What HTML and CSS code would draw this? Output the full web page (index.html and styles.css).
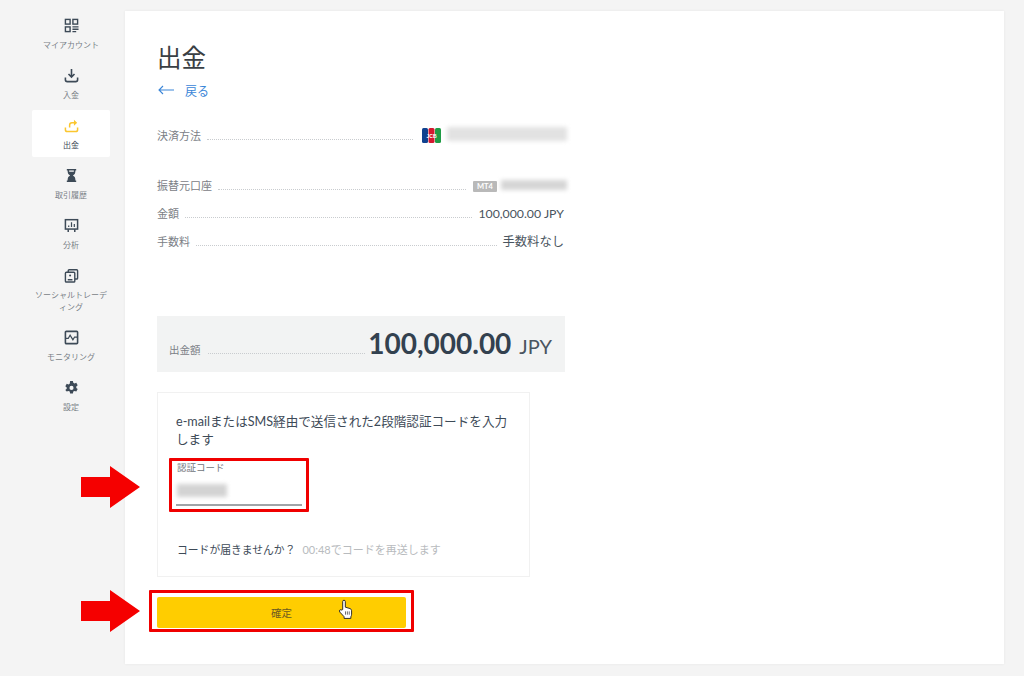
FILE: index.html
```html
<!DOCTYPE html>
<html lang="ja">
<head>
<meta charset="utf-8">
<title>出金</title>
<link rel="stylesheet" href="styles.css">
</head>
<body>
<div class="app">
  <nav class="sidebar">
    <a class="nav-item">
      <svg class="nav-icon" viewBox="0 0 16 16" fill="none" stroke="#3d4a57" stroke-width="1.5"><rect x="1.5" y="1.5" width="5" height="5"/><rect x="1.5" y="9.5" width="5" height="5"/><rect x="9.5" y="1.5" width="5" height="5"/><path d="M9 9.5h6.5M9 12h6.5M9 14.5h4"/></svg>
      <span class="nav-label">マイアカウント</span>
    </a>
    <a class="nav-item">
      <svg class="nav-icon" viewBox="0 0 16 16" fill="none" stroke="#3d4a57" stroke-width="1.7"><path d="M8 1v8M4.8 6.4 8 9.6l3.2-3.2"/><path d="M1.5 10v2.5q0 2 2 2h9q2 0 2-2V10"/></svg>
      <span class="nav-label">入金</span>
    </a>
    <a class="nav-item is-active">
      <svg class="nav-icon" viewBox="0 0 16 16" fill="none" stroke="#fbc62f" stroke-width="1.6"><path d="M6 10V7.5q0-2.5 2.5-2.5H13"/><path d="M10.6 1.8 14 5l-3.4 3.2z" fill="#fbc62f" stroke="none"/><path d="M1.5 10v2.5q0 2 2 2h9q2 0 2-2V10"/></svg>
      <span class="nav-label">出金</span>
    </a>
    <a class="nav-item">
      <svg class="nav-icon" viewBox="0 0 16 16" fill="#3d4a57"><path d="M3 1h10v1.600h-.9v1.600q0 2.400-2.600 3.800 2.600 1.400 2.600 3.800v1.600h.9V15H3v-1.600h.9v-1.600Q3.900 9.400 6.500 8 3.900 6.600 3.900 4.200V2.600H3z"/><path d="M5.500 2.600h5v1.400h-5z" fill="#f4f4f4"/></svg>
      <span class="nav-label">取引履歴</span>
    </a>
    <a class="nav-item">
      <svg class="nav-icon" viewBox="0 0 16 16" fill="none" stroke="#3d4a57" stroke-width="1.6"><rect x="1.500" y="1.800" width="13" height="10"/><path d="M4.500 12v3M11.500 12v3"/><path d="M5 9.500V8M8 9.500V4.500M11 9.500V6.500" stroke-width="1.300"/></svg>
      <span class="nav-label">分析</span>
    </a>
    <a class="nav-item">
      <svg class="nav-icon" viewBox="0 0 16 16" fill="none" stroke="#3d4a57" stroke-width="1.500"><rect x="1.500" y="4.500" width="10" height="10.500" rx="1"/><path d="M4.500 4.500V2.800q0-1 1-1h8q1 0 1 1v8q0 1-1 1h-1.800"/><circle cx="6.500" cy="8" r="1.100" fill="#3d4a57" stroke="none"/><path d="M4 12.500h5" stroke-width="1.600"/></svg>
      <span class="nav-label">ソーシャルトレーディング</span>
    </a>
    <a class="nav-item">
      <svg class="nav-icon" viewBox="0 0 16 16" fill="none" stroke="#3d4a57" stroke-width="1.700"><rect x="1.500" y="1.500" width="13" height="13" rx="1"/><path d="M2 9h2.500l2-3.500 3 5 1.800-3H14" stroke-width="1.300"/></svg>
      <span class="nav-label">モニタリング</span>
    </a>
    <a class="nav-item">
      <svg class="nav-icon" viewBox="0 0 16 16" fill="#3d4a57"><path fill-rule="evenodd" d="M6.500 1h3l.4 2 1.300.7 1.900-.7 1.500 2.600-1.500 1.300v1.500l1.500 1.300-1.500 2.600-1.900-.7-1.300.7-.4 2h-3l-.4-2-1.300-.7-1.900.7L1.400 10.700l1.500-1.300V7.900L1.400 6.600l1.500-2.600 1.900.7 1.300-.7zM8 6.200a2.200 2.200 0 1 0 0 4.400 2.200 2.200 0 0 0 0-4.400z"/></svg>
      <span class="nav-label">設定</span>
    </a>
  </nav>

  <main class="card">
    <h1 class="title">出金</h1>
    <a class="back">
      <svg class="back-arrow" viewBox="0 0 16 10" fill="none" stroke="#3b86d8" stroke-width="1.100"><path d="M16 5H1M5 1 1 5l4 4"/></svg>
      <span>戻る</span>
    </a>

    <section class="details">
      <div class="row row-method">
        <span class="row-label">決済方法</span><span class="dots"></span>
        <svg class="jcb" viewBox="0 0 19 15"><rect width="6" height="15" rx="1.500" fill="#10428f"/><rect x="6.500" width="6" height="15" rx="1.500" fill="#d3182f"/><rect x="13" width="6" height="15" rx="1.500" fill="#1f9b45"/><text x="9.500" y="9.500" class="jcb-text" text-anchor="middle">JCB</text></svg>
        <span class="redact redact-method"></span>
      </div>
      <div class="row row-account">
        <span class="row-label">振替元口座</span><span class="dots"></span>
        <span class="badge">MT4</span>
        <span class="redact redact-account"></span>
      </div>
      <div class="row">
        <span class="row-label">金額</span><span class="dots"></span>
        <span class="row-value">100,000.00 JPY</span>
      </div>
      <div class="row">
        <span class="row-label">手数料</span><span class="dots"></span>
        <span class="row-value">手数料なし</span>
      </div>
    </section>

    <section class="total">
      <span class="total-label">出金額</span><span class="dots"></span>
      <strong class="total-amount">100,000.00</strong>
      <span class="total-currency">JPY</span>
    </section>

    <section class="verify">
      <p class="verify-text">e-mailまたはSMS経由で送信された2段階認証コードを入力します</p>
      <div class="field">
        <span class="field-label">認証コード</span>
        <span class="redact redact-code"></span>
        <span class="field-line"></span>
      </div>
      <p class="resend"><span class="resend-q">コードが届きませんか？</span><span class="resend-timer">00:48でコードを再送します</span></p>
    </section>

    <div class="confirm-wrap">
      <button class="confirm" type="button">確定</button>
      <svg class="cursor" viewBox="0 0 16 22"><path d="M5 11V2.500a1.400 1.400 0 0 1 2.800 0V8.500l5 1.500q1.700.6 1.700 2.300v3.700q0 1.500-.8 2.800V20.500H6.500v-1.800L2 13.800q-1-1.400 0-2.300 1-.8 2.200.2z" fill="#fff" stroke="#222" stroke-width="1"/><path d="M8 13v3.500M10 13v3.500M12 13v3.500" stroke="#222" stroke-width=".7"/></svg>
    </div>
  </main>
</div>

<svg class="arrow arrow-code" viewBox="0 0 59 42"><path d="M0 11h29V0l30 21-30 21V31H0z" fill="#f50000"/></svg>
<svg class="arrow arrow-confirm" viewBox="0 0 59 42"><path d="M0 11h29V0l30 21-30 21V31H0z" fill="#f50000"/></svg>
</body>
</html>
```

FILE: styles.css
```css
* { box-sizing: border-box; }
html, body { margin: 0; height: 100%; }
body {
  position: relative;
  width: 1024px;
  height: 676px;
  overflow: hidden;
  background: #f4f4f4;
  color: #3d4a57;
  font-family: Lato, "Noto Sans CJK JP", sans-serif;
}
.app { display: flex; align-items: flex-start; }

.sidebar {
  width: 125px;
  padding: 10px 15px 0 32px;
  display: flex;
  flex-direction: column;
  gap: 3px;
}
.nav-item {
  display: flex;
  flex-direction: column;
  align-items: center;
  padding: 7px 2px 6px;
  border-radius: 2px;
}
.nav-item.is-active { background: #fff; }
.nav-item.is-active .nav-label { color: #3d4a57; }
.nav-icon { width: 15px; height: 15px; margin: 1px 0 6px; display: block; }
.nav-label {
  font-size: 8px;
  line-height: 12px;
  color: #797f86;
  text-align: center;
  line-break: loose;
}

.card {
  width: 879px;
  height: 653px;
  margin-top: 11px;
  padding: 29px 32px 0;
  background: #fff;
  box-shadow: 0 0 3px rgba(0, 0, 0, .06);
}
.title {
  margin: 0;
  font-size: 24.500px;
  line-height: 36px;
  font-weight: 400;
  color: #3a3f44;
}
.back {
  display: flex;
  align-items: center;
  gap: 11px;
  margin: 5px 0 0 1px;
  height: 18px;
  font-size: 12px;
  color: #3b86d8;
}
.back-arrow { width: 16px; height: 10px; }

.details { width: 408px; margin-top: 25px; }
.row {
  display: flex;
  align-items: flex-end;
  height: 28px;
  font-size: 11px;
}
.row-method { height: 20px; margin-bottom: 30px; }
.row-account { height: 20px; margin-bottom: 0; }
.row-label { line-height: 16px; color: #7b8086; }
.dots {
  flex: 1;
  margin: 0 6px 4px;
  border-bottom: 1px dotted #c9cccf;
}
.row-value {
  margin-right: 1px;
  font-size: 12.300px;
  line-height: 16px;
  color: #4a5560;
}
.jcb { width: 19px; height: 15px; margin: 0 6px 1px 3px; }
.jcb-text { font: 700 5px "Liberation Sans", sans-serif; fill: #fff; }
.redact { display: block; background: #d9d9d9; filter: blur(2px); }
.redact-method { width: 120px; height: 14px; margin: 0 -2px 3px 0; background: #e2e2e2; }
.redact-account { width: 66px; height: 10px; margin: 0 -2px 4px 0; background: #d6d6d6; }
.badge {
  margin: 0 4px 2px 1px;
  width: 24px;
  height: 11px;
  border-radius: 1px;
  background: #b9b9b9;
  color: #fff;
  font-size: 7.500px;
  font-weight: 700;
  line-height: 11px;
  text-align: center;
}

.total {
  display: flex;
  align-items: baseline;
  width: 408px;
  height: 56px;
  margin-top: 66px;
  padding: 9px 13px 0 12px;
  background: #f2f3f3;
}
.total-label { font-size: 10.500px; color: #7b8086; }
.total .dots { margin: 0 3px 0 7px; }
.total-amount { font-size: 28px; line-height: 36px; color: #33414f; font-weight: 700; }
.total-currency { margin-left: 8px; font-size: 20px; color: #4a5560; }

.verify {
  width: 373px;
  height: 185px;
  margin-top: 20px;
  padding: 20px 19px 0 18px;
  border: 1px solid #f1f1f1;
}
.verify-text {
  margin: 0;
  font-size: 12.600px;
  line-height: 18px;
  color: #3d4a57;
}
.field {
  display: flex;
  flex-direction: column;
  width: 140px;
  height: 54px;
  margin: 9px 0 0 -7px;
  padding: 1px 4px 0;
  border: 3px solid #f00000;
  border-radius: 1px;
}
.field-label { font-size: 9.500px; line-height: 12px; color: #6f757b; margin-left: 1px; }
.redact-code { width: 50px; height: 13px; margin: 10px 0 0 1px; background: #d3d3d3; }
.field-line { flex: none; height: 1.500px; margin-top: 7px; background: #a0a4a8; }
.resend { margin: 30px 0 0 1px; font-size: 10.800px; line-height: 16px; white-space: nowrap; }
.resend-q { color: #3d4a57; margin-right: 7px; }
.resend-timer { color: #b8bbbe; font-size: 11px; }

.confirm-wrap {
  position: relative;
  width: 265px;
  height: 42px;
  margin: 13px 0 0 -8px;
  padding: 4px 4px 0 5px;
  border: 3px solid #f00000;
  border-radius: 1px;
}
.confirm {
  display: block;
  width: 249px;
  height: 31px;
  margin: 0;
  padding: 0;
  border: 0;
  border-radius: 2px;
  background: #ffcd00;
  color: #6a5a20;
  font: 10.500px Lato, "Noto Sans CJK JP", sans-serif;
}
.cursor { position: absolute; left: 186px; top: 6px; width: 15px; height: 21px; }
.arrow { position: absolute; left: 81px; width: 59px; height: 42px; }
.arrow-code { top: 466px; }
.arrow-confirm { top: 590px; }
```
